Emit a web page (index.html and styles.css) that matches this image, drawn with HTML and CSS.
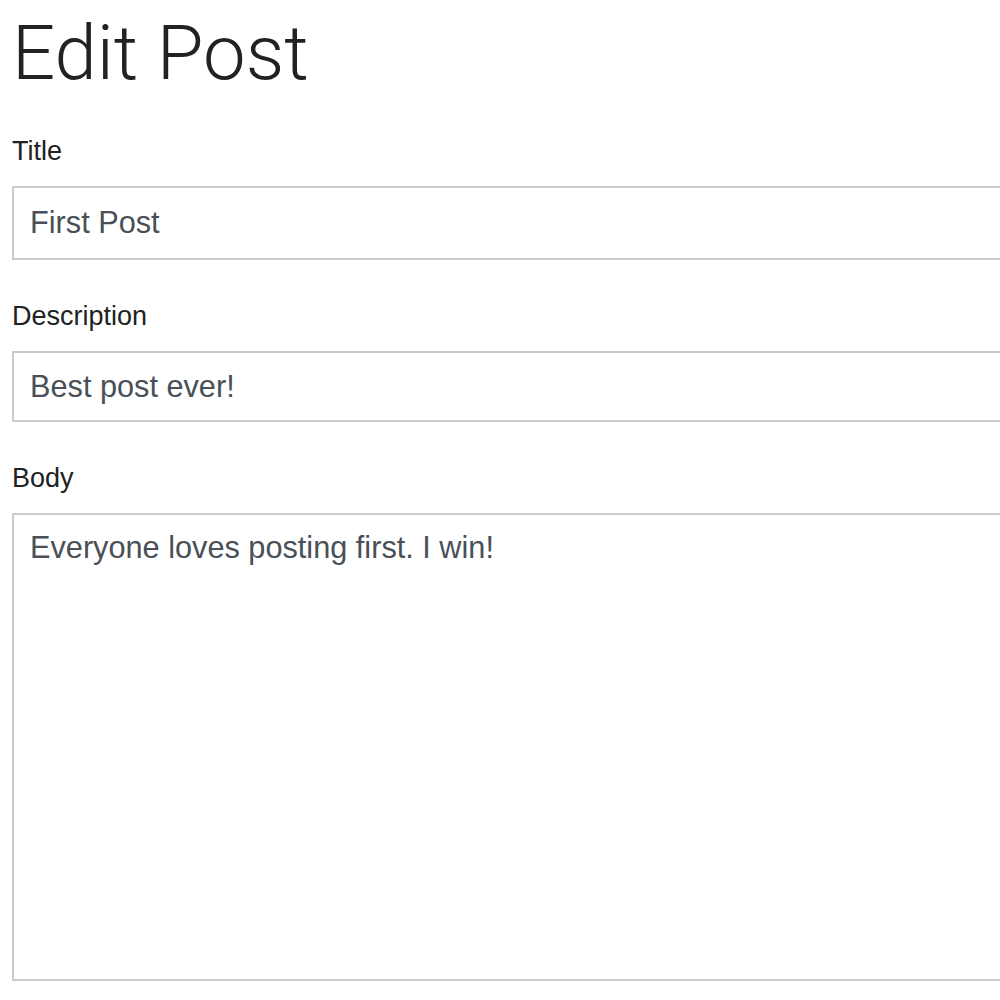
FILE: index.html
```html
<!DOCTYPE html>
<html lang="en">
<head>
<meta charset="utf-8">
<title>Edit Post</title>
<link rel="stylesheet" href="styles.css">
</head>
<body>
<main class="page">
  <h1 class="page-title">Edit Post</h1>
  <form class="post-form">
    <div class="field">
      <label class="field-label" for="title">Title</label>
      <input class="field-input" id="title" type="text" value="First Post">
    </div>
    <div class="field">
      <label class="field-label" for="description">Description</label>
      <input class="field-input field-input--short" id="description" type="text" value="Best post ever!">
    </div>
    <div class="field">
      <label class="field-label" for="body">Body</label>
      <textarea class="field-textarea" id="body">Everyone loves posting first. I win!</textarea>
    </div>
  </form>
</main>
</body>
</html>
```

FILE: styles.css
```css
html, body {
  margin: 0;
  padding: 0;
  background: #fff;
  overflow: hidden;
}

.page {
  padding: 0 0 0 12px;
  font-family: "Liberation Sans", Arial, sans-serif;
  color: #222;
}

.page-title {
  margin: 0;
  padding-top: 13px;
  font-family: Roboto, "Liberation Sans", sans-serif;
  font-weight: 300;
  font-size: 76px;
  line-height: 80px;
  color: #222;
}

.post-form {
  display: flex;
  flex-direction: column;
  width: 1010px;
  margin-top: 42px;
  gap: 40px;
}

.field {
  display: flex;
  flex-direction: column;
  gap: 19px;
}

.field-label {
  font-size: 27px;
  line-height: 32px;
  color: #222;
}

.field-input,
.field-textarea {
  box-sizing: border-box;
  width: 100%;
  margin: 0;
  border: 2px solid #cbcbcb;
  border-radius: 0;
  background: #fff;
  font-family: "Liberation Sans", Arial, sans-serif;
  font-size: 30.7px;
  color: #495057;
  outline: none;
}

.field-input {
  height: 74px;
  padding: 0 16px;
}

.field-input--short {
  height: 71px;
}

.field-textarea {
  height: 468px;
  padding: 12px 16px;
  line-height: 42px;
  resize: none;
}
```
